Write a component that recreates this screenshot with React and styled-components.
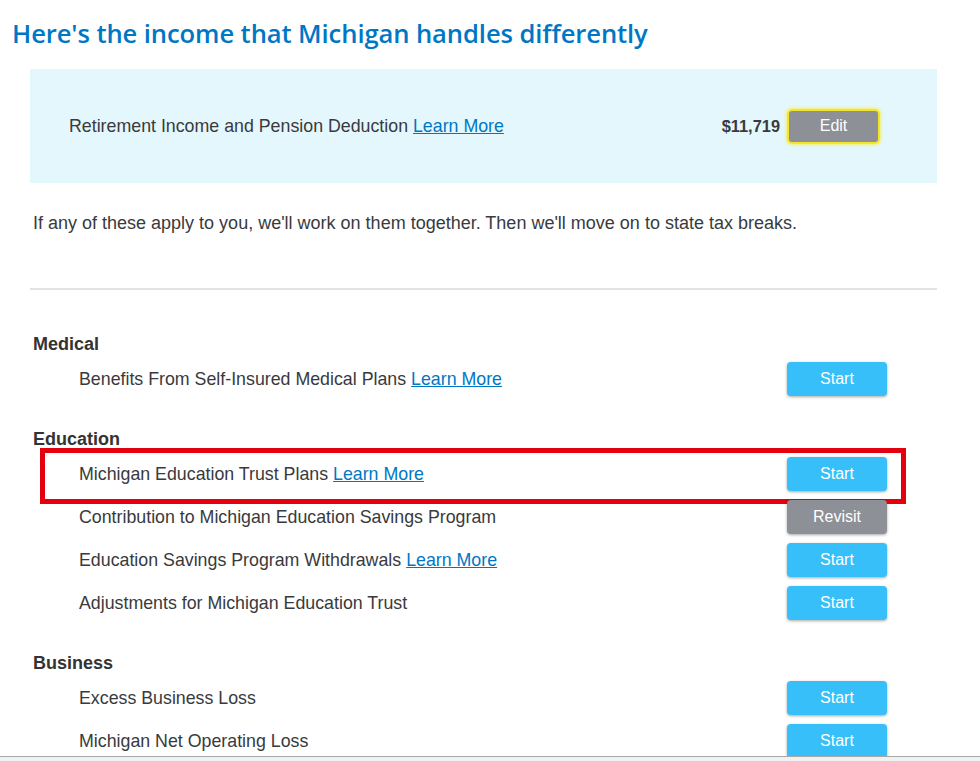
import React from 'react';
import styled, { createGlobalStyle } from 'styled-components';

const GlobalStyle = createGlobalStyle`
  html, body {
    margin: 0;
    padding: 0;
    background: #ffffff;
    overflow: hidden;
  }
  body {
    font-family: "Liberation Sans", Arial, sans-serif;
    color: #393a3d;
  }
`;

const sections = [
  {
    title: 'Medical',
    items: [{ label: 'Benefits From Self-Insured Medical Plans', learn: true, action: 'Start' }],
  },
  {
    title: 'Education',
    items: [
      { label: 'Michigan Education Trust Plans', learn: true, action: 'Start', marked: true },
      { label: 'Contribution to Michigan Education Savings Program', action: 'Revisit' },
      { label: 'Education Savings Program Withdrawals', learn: true, action: 'Start' },
      { label: 'Adjustments for Michigan Education Trust', action: 'Start' },
    ],
  },
  {
    title: 'Business',
    items: [
      { label: 'Excess Business Loss', action: 'Start' },
      { label: 'Michigan Net Operating Loss', action: 'Start' },
    ],
  },
];

const App = () => {
  return (
    <Page>
      <GlobalStyle />
      <Heading>Here's the income that Michigan handles differently</Heading>
      <Content>
        <SummaryBox>
          <SummaryLabel>
            Retirement Income and Pension Deduction <LearnMore href="#">Learn More</LearnMore>
          </SummaryLabel>
          <SummaryRight>
            <Amount>$11,719</Amount>
            <EditButton>Edit</EditButton>
          </SummaryRight>
        </SummaryBox>
        <Intro>If any of these apply to you, we'll work on them together. Then we'll move on to state tax breaks.</Intro>
        <Divider />
        {sections.map(section => (
          <Section key={section.title}>
            <SectionTitle>{section.title}</SectionTitle>
            {section.items.map(item => (
              <Row key={item.label} marked={item.marked}>
                <RowLabel>
                  {item.label}
                  {item.learn && (
                    <>
                      {' '}
                      <LearnMore href="#">Learn More</LearnMore>
                    </>
                  )}
                </RowLabel>
                <ActionButton variant={item.action === 'Revisit' ? 'gray' : 'blue'}>{item.action}</ActionButton>
              </Row>
            ))}
          </Section>
        ))}
      </Content>
      <ScrollStrip />
    </Page>
  );
};

const Page = styled.div`
  padding-top: 16px;
  min-height: 761px;
  box-sizing: border-box;
`;

const Heading = styled.h1`
  margin: 0 0 17px 12px;
  font-family: "Open Sans", sans-serif;
  font-weight: 600;
  font-size: 25.6px;
  line-height: 36px;
  color: #0077c5;
  letter-spacing: -0.1px;
`;

const Content = styled.div`
  margin-left: 30px;
  width: 907px;
`;

const SummaryBox = styled.div`
  height: 114px;
  background: #e4f7fc;
  display: flex;
  align-items: center;
  justify-content: space-between;
  padding: 0 57px 0 39px;
  box-sizing: border-box;
`;

const SummaryLabel = styled.div`
  font-size: 17.8px;
  line-height: 22px;
`;

const SummaryRight = styled.div`
  display: flex;
  align-items: center;
  gap: 7px;
`;

const Amount = styled.span`
  font-size: 16.4px;
  font-weight: 700;
  color: #393a3d;
`;

const LearnMore = styled.a`
  color: #0077c5;
  text-decoration: underline;
`;

const EditButton = styled.button`
  width: 93px;
  height: 35px;
  border: 2px solid #f5e52a;
  border-radius: 5px;
  box-shadow: 0 0 3px 1px rgba(255, 236, 40, 0.7);
  background: #8d9096;
  color: #ffffff;
  font-family: "Liberation Sans", Arial, sans-serif;
  font-size: 16px;
  cursor: pointer;
`;

const Intro = styled.p`
  margin: 29px 0 0 3px;
  font-size: 18px;
  line-height: 22px;
`;

const Divider = styled.hr`
  margin: 54px 0 0;
  border: none;
  height: 2px;
  background: #e3e3e3;
`;

const Section = styled.section`
  margin-top: 29px;
  &:first-of-type {
    margin-top: 44px;
  }
`;

const SectionTitle = styled.h3`
  margin: 0 0 3px 3px;
  font-size: 18px;
  line-height: 20px;
  font-weight: 700;
  color: #333333;
`;

const Row = styled.div`
  position: relative;
  height: 43px;
  display: flex;
  align-items: center;
  justify-content: space-between;
  padding: 0 50px 0 49px;
  &::after {
    content: '';
    display: ${({ marked }) => (marked ? 'block' : 'none')};
    position: absolute;
    top: -4px;
    bottom: -9px;
    left: 10px;
    right: 31px;
    border: 5px solid #e3000f;
    pointer-events: none;
  }
`;

const RowLabel = styled.div`
  font-size: 17.8px;
  line-height: 20px;
`;

const ActionButton = styled.button`
  width: 100px;
  height: 34px;
  border: none;
  border-radius: 4px;
  background: ${({ variant }) => (variant === 'gray' ? '#8d9096' : '#37bffa')};
  box-shadow: 0 1px 3px rgba(0, 0, 0, 0.35);
  color: #ffffff;
  font-family: "Liberation Sans", Arial, sans-serif;
  font-size: 16px;
  cursor: pointer;
`;

const ScrollStrip = styled.div`
  position: fixed;
  left: 0;
  right: 0;
  bottom: 0;
  height: 4px;
  border-top: 1px solid #a8a8a8;
  background: #f1f1f1;
`;

export default App;
